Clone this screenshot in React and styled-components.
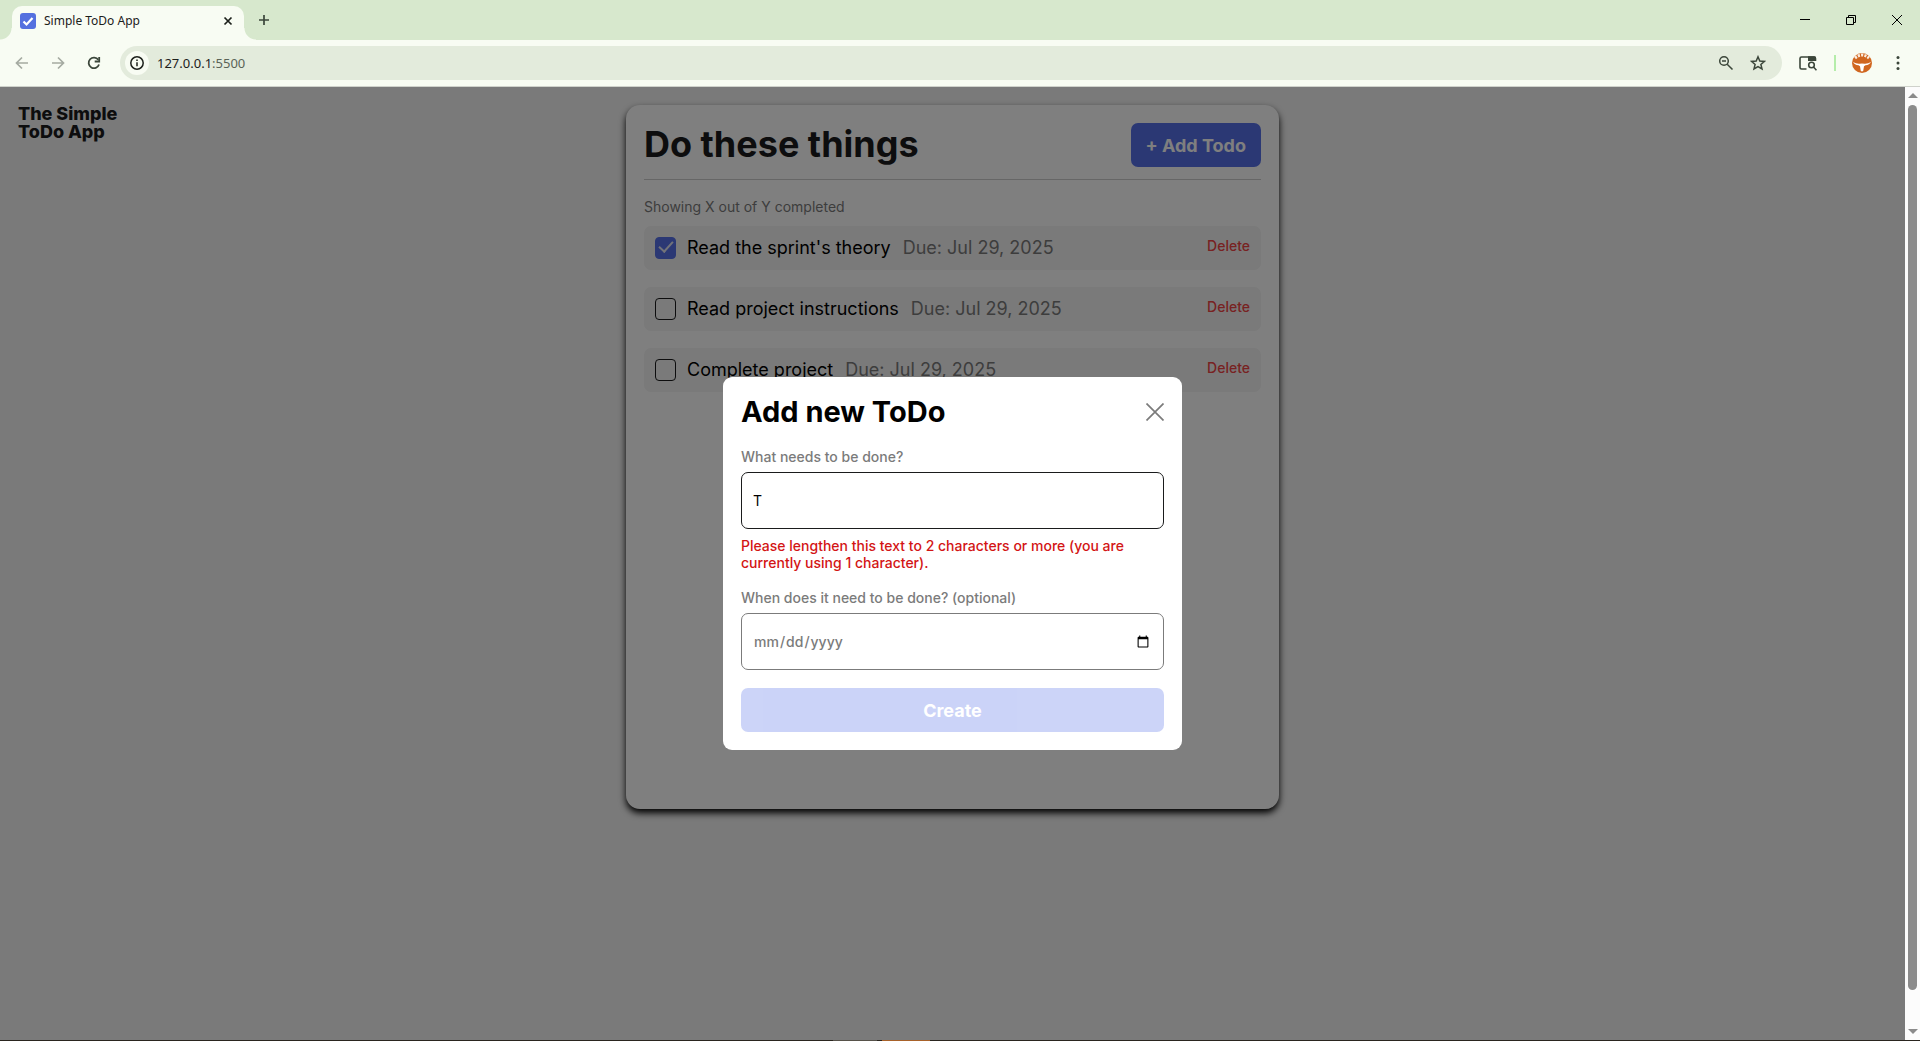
import React, { useState } from "react";
import styled, { createGlobalStyle } from "styled-components";

const GlobalStyle = createGlobalStyle`
  *, *::before, *::after { box-sizing: border-box; }
  body { margin: 0; font-family: Inter, "Liberation Sans", sans-serif; color: #1a1b1c; }
  button, input { font-family: inherit; }
  h1, h2, p, ul { margin: 0; padding: 0; }
  ul { list-style: none; }
`;

const Window = styled.div`
  display: flex;
  flex-direction: column;
  min-height: 100vh;
`;

/* ---------- browser frame ---------- */

const TabStrip = styled.div`
  display: flex;
  align-items: flex-end;
  height: 40px;
  padding-left: 12px;
  background: #d7e8cd;
`;

const Tab = styled.div`
  display: flex;
  align-items: center;
  gap: 8px;
  position: relative;
  width: 232px;
  height: 34px;
  padding: 0 8px 5px;
  border-radius: 10px 10px 0 0;
  background: #f8fcf3;

  &::before, &::after {
    content: "";
    position: absolute;
    bottom: 0;
    width: 12px;
    height: 12px;
  }
  &::before {
    left: -12px;
    background: radial-gradient(circle at 0 0, transparent 11px, #f8fcf3 12px);
  }
  &::after {
    right: -12px;
    background: radial-gradient(circle at 100% 0, transparent 11px, #f8fcf3 12px);
  }
`;

const TabTitle = styled.span`
  flex: 1;
  font: 12px "Noto Sans", sans-serif;
  color: #1c201b;
`;

const FrameButton = styled.button`
  display: flex;
  align-items: center;
  justify-content: center;
  width: ${(p) => p.$w || 36}px;
  height: ${(p) => p.$h || 34}px;
  padding: 0;
  border: 0;
  background: none;
  color: ${(p) => p.$color || "#3b463a"};
`;

const TabActions = styled.div`
  display: flex;
  align-items: center;
  height: 40px;
  margin-left: auto;
`;

const Toolbar = styled.div`
  display: flex;
  align-items: center;
  height: 47px;
  padding: 0 4px;
  background: #f8fcf3;
  border-bottom: 1px solid #cfd2cb;
`;

const AddressBar = styled.form`
  display: flex;
  flex: 1;
  align-items: center;
  height: 34px;
  margin: 0 8px;
  padding: 0 8px 0 5px;
  border-radius: 17px;
  background: #e3ebdc;
`;

const SiteInfo = styled.button`
  display: flex;
  align-items: center;
  justify-content: center;
  width: 24px;
  height: 24px;
  padding: 0;
  border: 0;
  border-radius: 50%;
  background: #f8fcf3;
  color: #1c201b;
`;

const Address = styled.div`
  flex: 1;
  margin-left: 8px;
  font: 13px "Noto Sans", sans-serif;
  color: #1c201b;

  span { color: #5a6357; }
`;

const Separator = styled.span`
  width: 2px;
  height: 16px;
  margin: 0 8px;
  background: #b5edaa;
`;

const Viewport = styled.div`
  display: flex;
  flex: 1;
  background: #fcfcfc;
`;

const ScrollTrack = styled.div`
  display: flex;
  flex-direction: column;
  align-items: center;
  width: 15px;
  padding: 6px 0;
`;

const ScrollThumb = styled.div`
  flex: 1;
  width: 9px;
  margin: 7px 0 39px;
  border-radius: 5px;
  background: #8b8b8b;
`;

const Arrow = styled.span`
  border: 5px solid transparent;
  border-top: ${(p) => (p.$down ? "5px solid #8b8b8b" : "0")};
  border-bottom: ${(p) => (p.$down ? "0" : "5px solid #8b8b8b")};
`;

const Taskbar = styled.div`
  display: flex;
  height: 1px;
  padding-left: 833px;
  gap: 5px;
  background: #2a251f;
`;

const TaskItem = styled.span`
  width: ${(p) => p.$w}px;
  background: ${(p) => p.$color};
`;

/* ---------- to-do page ---------- */

const Page = styled.main`
  display: grid;
  grid-template-columns: 1fr auto 1fr;
  align-items: start;
  flex: 1;
  position: relative;
  padding: 18px;
  background: #f4f4f4;
`;

const Logo = styled.p`
  width: 110px;
  font-size: 18px;
  line-height: 18px;
  font-weight: 800;
`;

const Card = styled.section`
  width: 653px;
  min-height: 704px;
  padding: 18px;
  border-radius: 14px;
  background: #fff;
  box-shadow: 0 4px 7px #000;
`;

const CardHeader = styled.header`
  display: flex;
  align-items: flex-start;
  justify-content: space-between;
  padding-bottom: 12px;
  border-bottom: 1px solid #ccc;
`;

const CardTitle = styled.h1`
  font-size: 36px;
  line-height: 42px;
  font-weight: 700;
`;

const PrimaryButton = styled.button`
  height: 44px;
  padding: 0 15px;
  border: 0;
  border-radius: 7px;
  background: #5671e9;
  color: #fff;
  font-size: 18px;
  font-weight: 700;

  &:disabled { opacity: 0.3; }
`;

const Counter = styled.p`
  padding: 18px 0 10px;
  font-size: 14px;
  line-height: 18px;
  color: #7b7b7b;
`;

const TodoList = styled.ul`
  display: flex;
  flex-direction: column;
  gap: 17px;
`;

const TodoItem = styled.li`
  display: flex;
  align-items: center;
  height: 44px;
  padding: 0 11px;
  border-radius: 7px;
  background: #f4f4f4;
`;

const Check = styled.input`
  appearance: none;
  display: grid;
  width: 21px;
  height: 22px;
  margin: 0 11px 0 0;
  border: 1px solid #1a1b1c;
  border-radius: 4px;

  &:checked {
    border-color: #5671e9;
    background: #5671e9;
  }
  &:checked::after {
    content: "";
    place-self: center;
    width: 8px;
    height: 14px;
    border: solid #e4e6f2;
    border-width: 0 2px 2px 0;
    transform: translateY(-3px) rotate(42deg);
  }
`;

const TodoName = styled.label`
  font-size: 18px;
  line-height: 22px;
  color: #000;
`;

const DueDate = styled.span`
  flex: 1;
  margin-left: 12px;
  font-size: 18px;
  line-height: 22px;
  color: #7b7b7b;
`;

const DeleteButton = styled.button`
  padding: 0 0 4px;
  border: 0;
  background: none;
  color: #f04444;
  font-size: 14px;
  line-height: 18px;
  font-weight: 500;
`;

/* ---------- modal ---------- */

const Overlay = styled.div`
  position: absolute;
  inset: 0;
  display: flex;
  align-items: center;
  justify-content: center;
  background: rgba(0, 0, 0, 0.5);
`;

const Dialog = styled.form`
  display: flex;
  flex-direction: column;
  width: 459px;
  padding: 18px;
  border-radius: 9px;
  background: #fff;
`;

const DialogHeader = styled.header`
  display: flex;
  align-items: center;
  justify-content: space-between;
  margin-bottom: 19px;
`;

const DialogTitle = styled.h2`
  font-size: 29px;
  line-height: 34px;
  font-weight: 700;
  color: #000;
`;

const CloseButton = styled.button`
  display: flex;
  padding: 0;
  border: 0;
  background: none;
  color: #7b7b7b;
`;

const FieldLabel = styled.label`
  font-size: 14px;
  line-height: 18px;
  font-weight: 500;
  color: #7b7b7b;
  margin-bottom: 6px;
`;

const TextField = styled.input`
  width: 100%;
  height: 57px;
  padding: 0 11px;
  border: 1px solid ${(p) => (p.$muted ? "#7b7b7b" : "#1a1b1c")};
  border-radius: 7px;
  background: #fff;
  color: ${(p) => (p.$muted ? "#7b7b7b" : "#000")};
  font-size: 14px;
  font-weight: ${(p) => (p.$muted ? 500 : 400)};
  outline: 0;
`;

const ErrorText = styled.p`
  padding: 8px 0 18px;
  font-size: 14px;
  line-height: 17px;
  font-weight: 500;
  color: #d31515;
`;

const SubmitButton = styled(PrimaryButton)`
  margin-top: 18px;
`;

const Icon = ({ size = 16, sw = 1.5, children, box = 16 }) => (
  <svg width={size} height={size} viewBox={`0 0 ${box} ${box}`} fill="none" stroke="currentColor" strokeWidth={sw} aria-hidden="true">
    {children}
  </svg>
);

const todos = [
  { id: "t1", name: "Read the sprint's theory", due: "Jul 29, 2025", done: true },
  { id: "t2", name: "Read project instructions", due: "Jul 29, 2025", done: false },
  { id: "t3", name: "Complete project", due: "Jul 29, 2025", done: false },
];

function BrowserFrame() {
  return (
    <>
      <TabStrip>
        <Tab>
          <svg width="16" height="16" viewBox="0 0 16 16" aria-hidden="true">
            <rect width="16" height="16" rx="3" fill="#5470df" />
            <path d="M3.5 8.5l3 3L12.5 5" fill="none" stroke="#fff" strokeWidth="2.2" />
          </svg>
          <TabTitle>Simple ToDo App</TabTitle>
          <FrameButton $w={16} $h={16} $color="#1c201b" aria-label="Close tab">
            <Icon size={16} sw={1.7}><path d="M4.5 4.5l7 7M11.5 4.5l-7 7" /></Icon>
          </FrameButton>
        </Tab>
        <FrameButton $w={40} $h={40} aria-label="New tab">
          <Icon sw={1.7}><path d="M8 3v10M3 8h10" /></Icon>
        </FrameButton>
        <TabActions>
          <FrameButton $w={46} $color="#000" aria-label="Minimize">
            <Icon size={12} box={12} sw={1}><path d="M1 5.5h10" /></Icon>
          </FrameButton>
          <FrameButton $w={46} $color="#000" aria-label="Restore">
            <Icon size={12} box={12} sw={1}><path d="M1.5 3.5h7v7h-7zM3.5 3.5v-2h7v7h-2" /></Icon>
          </FrameButton>
          <FrameButton $w={46} $color="#000" aria-label="Close window">
            <Icon size={12} box={12} sw={1}><path d="M1 1l10 10M11 1L1 11" /></Icon>
          </FrameButton>
        </TabActions>
      </TabStrip>
      <Toolbar>
        <FrameButton $color="#a5aba1" aria-label="Back">
          <Icon sw={1.7}><path d="M14 8H3M8 2.5L2.5 8 8 13.5" /></Icon>
        </FrameButton>
        <FrameButton $color="#a5aba1" aria-label="Forward">
          <Icon sw={1.7}><path d="M2 8h11M8 2.5L13.5 8 8 13.5" /></Icon>
        </FrameButton>
        <FrameButton aria-label="Reload">
          <Icon sw={1.8}>
            <path d="M13 9.5A5.3 5.3 0 1 1 12.3 4.8" />
            <path d="M13.2 2v4.5H8.7" />
          </Icon>
        </FrameButton>
        <AddressBar>
          <SiteInfo type="button" aria-label="Site information">
            <Icon sw={1.5}>
              <circle cx="8" cy="8" r="6.2" />
              <path d="M8 7.3v4M8 4.6v1.5" />
            </Icon>
          </SiteInfo>
          <Address>127.0.0.1<span>:5500</span></Address>
          <FrameButton $w={32} type="button" aria-label="Zoom">
            <Icon>
              <circle cx="6" cy="6" r="4.3" />
              <path d="M9.2 9.2l5.3 5.3M4 6h4" />
            </Icon>
          </FrameButton>
          <FrameButton $w={32} type="button" aria-label="Bookmark this page">
            <Icon>
              <path d="M8 1.8l1.8 4.2 4.6.4-3.5 3 1.1 4.5L8 11.5l-4 2.4 1.1-4.5-3.5-3 4.6-.4z" />
            </Icon>
          </FrameButton>
        </AddressBar>
        <FrameButton aria-label="Search tabs">
          <svg width="18" height="16" viewBox="0 0 18 16" fill="none" stroke="currentColor" strokeWidth="1.6" aria-hidden="true">
            <path d="M7.5 14H2.5Q1 14 1 12.5V3.5Q1 2 2.5 2H15Q16.5 2 16.5 3.5V6" />
            <path d="M9 1.3h6.5q1.5 0 1.5 1.5V6H9z" fill="currentColor" stroke="none" />
            <circle cx="12.5" cy="10" r="2.8" />
            <path d="M14.5 12l3 3.3" />
          </svg>
        </FrameButton>
        <Separator />
        <FrameButton aria-label="Profile">
          <svg width="20" height="20" viewBox="0 0 20 20" aria-hidden="true">
            <circle cx="10" cy="10" r="10" fill="#d0661f" />
            <path d="M3 5Q10-1 17 5" fill="none" stroke="#fbeee2" strokeWidth="3" strokeDasharray="2.2 1.2" />
            <path d="M1 9q3 2 6.500 1.800 2.500-.6 5 0Q16 11 19 9q-1.500 3-5.500 3.300l-1.500 1-.8 4.700q-1.200.8-2.400 0L8 13.300l-1.500-1Q2.500 12 1 9z" fill="#fff" />
          </svg>
        </FrameButton>
        <FrameButton aria-label="Browser menu">
          <svg width="4" height="16" viewBox="0 0 4 16" fill="currentColor" aria-hidden="true">
            <circle cx="2" cy="2.5" r="1.5" />
            <circle cx="2" cy="8" r="1.5" />
            <circle cx="2" cy="13.5" r="1.5" />
          </svg>
        </FrameButton>
      </Toolbar>
    </>
  );
}

function AddTodoDialog() {
  const [name, setName] = useState("T");
  const invalid = name.length < 2;
  return (
    <Overlay>
      <Dialog role="dialog" aria-labelledby="dialog-title" noValidate>
        <DialogHeader>
          <DialogTitle id="dialog-title">Add new ToDo</DialogTitle>
          <CloseButton type="button" aria-label="Close">
            <Icon size={18} box={18} sw={1.7}><path d="M.5.5l17 17M17.5.5l-17 17" /></Icon>
          </CloseButton>
        </DialogHeader>
        <FieldLabel htmlFor="todo-name">What needs to be done?</FieldLabel>
        <TextField id="todo-name" type="text" value={name} onChange={(e) => setName(e.target.value)} />
        <ErrorText>
          {invalid && "Please lengthen this text to 2 characters or more (you are currently using 1 character)."}
        </ErrorText>
        <FieldLabel htmlFor="todo-date">When does it need to be done? (optional)</FieldLabel>
        <TextField id="todo-date" type="date" $muted />
        <SubmitButton type="submit" disabled={invalid}>Create</SubmitButton>
      </Dialog>
    </Overlay>
  );
}

export default function App() {
  return (
    <Window>
      <GlobalStyle />
      <BrowserFrame />
      <Viewport>
        <Page>
          <Logo>The Simple ToDo App</Logo>
          <Card>
            <CardHeader>
              <CardTitle>Do these things</CardTitle>
              <PrimaryButton type="button">+ Add Todo</PrimaryButton>
            </CardHeader>
            <Counter>Showing X out of Y completed</Counter>
            <TodoList>
              {todos.map((todo) => (
                <TodoItem key={todo.id}>
                  <Check type="checkbox" id={todo.id} defaultChecked={todo.done} />
                  <TodoName htmlFor={todo.id}>{todo.name}</TodoName>
                  <DueDate>Due: {todo.due}</DueDate>
                  <DeleteButton type="button">Delete</DeleteButton>
                </TodoItem>
              ))}
            </TodoList>
          </Card>
          <AddTodoDialog />
        </Page>
        <ScrollTrack>
          <Arrow />
          <ScrollThumb />
          <Arrow $down />
        </ScrollTrack>
      </Viewport>
      <Taskbar>
        <TaskItem $w={44} $color="#57524a" />
        <TaskItem $w={48} $color="#a8622a" />
      </Taskbar>
    </Window>
  );
}
